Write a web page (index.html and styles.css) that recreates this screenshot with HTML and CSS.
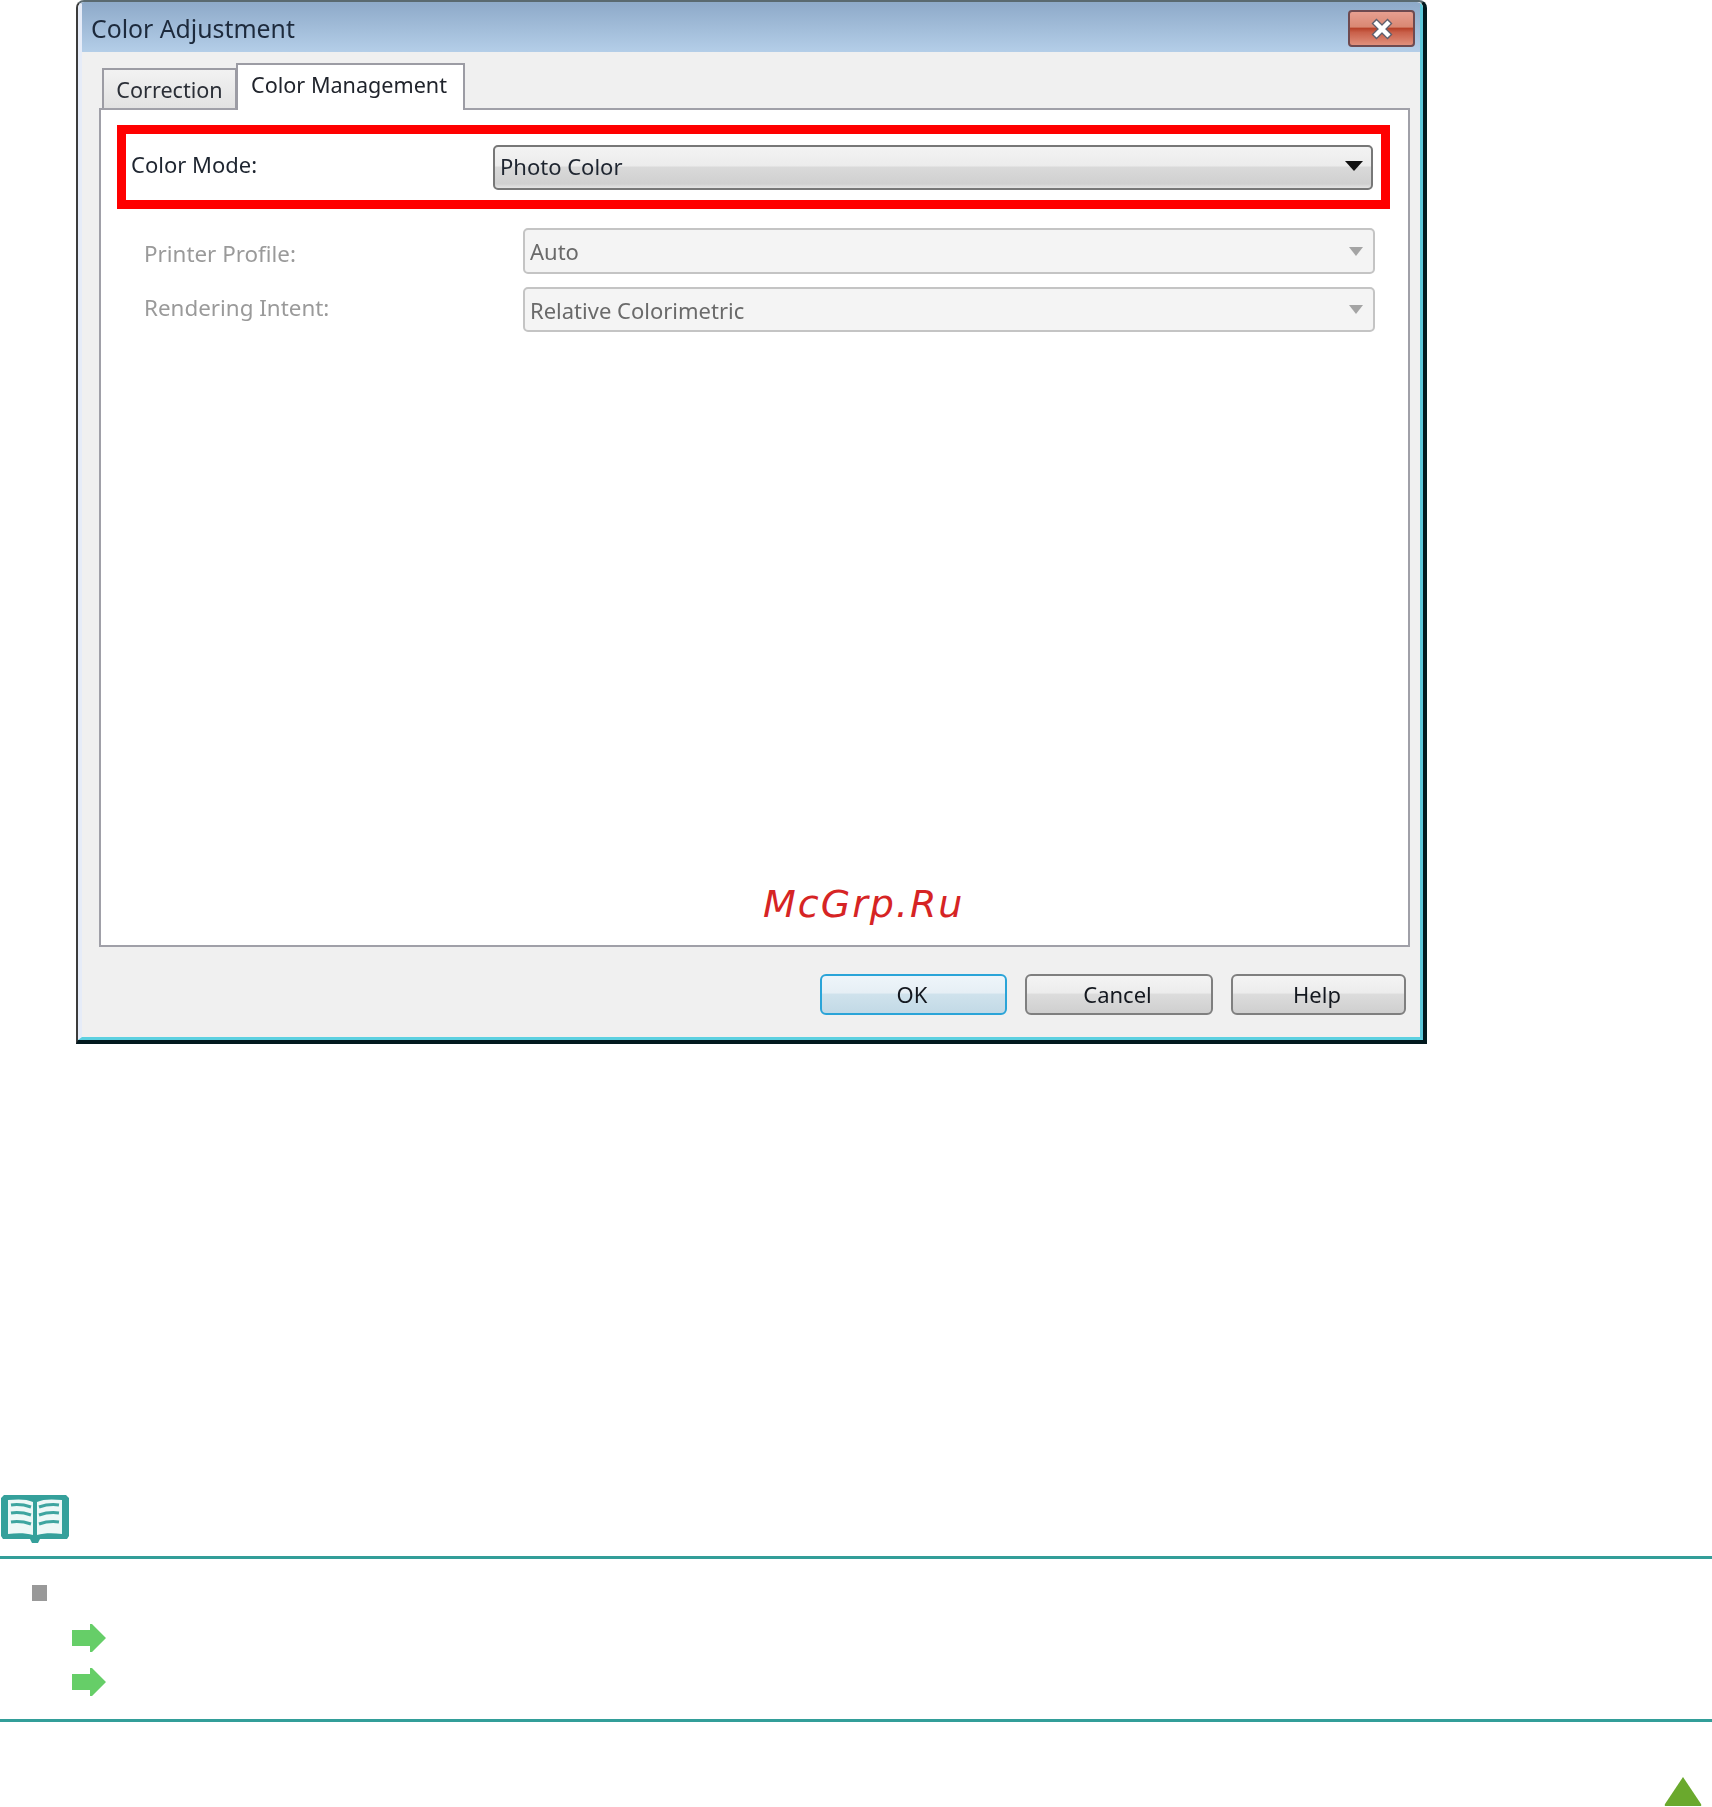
FILE: index.html
```html
<!DOCTYPE html>
<html lang="en">
<head>
<meta charset="utf-8">
<title>Color Adjustment</title>
<link rel="stylesheet" href="styles.css">
</head>
<body>
<div class="page">
  <section class="dialog">
    <div class="dialog-inner">
      <header class="titlebar">
        <span class="title">Color Adjustment</span>
        <div class="close">
          <svg width="26" height="22" viewBox="0 0 26 22"><path d="M5 3l16 16M21 3L5 19" stroke="#5d5f6e" stroke-width="7" fill="none"/><path d="M6 4l14 14M20 4L6 18" stroke="#fff" stroke-width="4.5" fill="none"/></svg>
        </div>
      </header>
      <div class="client">
        <div class="tabs">
          <div class="tab tab-back"><span>Correction</span></div>
          <div class="tab tab-active"><span>Color Management</span></div>
        </div>
        <div class="panel">
          <div class="highlight">
            <span class="label label-strong">Color Mode:</span>
            <div class="select select-on">
              <span>Photo Color</span>
              <i class="caret caret-on"></i>
            </div>
          </div>
          <div class="fields">
            <span class="label label-off label-profile">Printer Profile:</span>
            <div class="select select-off"><span>Auto</span><i class="caret caret-off"></i></div>
            <span class="label label-off label-intent">Rendering Intent:</span>
            <div class="select select-off select-second"><span>Relative Colorimetric</span><i class="caret caret-off"></i></div>
          </div>
          <div class="watermark">McGrp.Ru</div>
        </div>
        <div class="buttons">
          <div class="btn btn-ok"><span>OK</span></div>
          <div class="btn btn-cancel"><span>Cancel</span></div>
          <div class="btn btn-help"><span>Help</span></div>
        </div>
      </div>
    </div>
  </section>

  <section class="note">
    <svg class="book" width="70" height="48" viewBox="0 0 70 48">
      <path d="M4 0h62l3 3v38l-2 3H40l-2 4h-6l-2-4H3l-2-3V3z" fill="#35a09b"/>
      <path d="M8 5c10-1 19-1 25 2v33c-7-2-16-2-25-1zM62 5c-10-1-19-1-25 2v33c7-2 16-2 25-1z" fill="#eef8f7"/>
      <path d="M11 10c7-1 14 0 20 2M11 18c7-1 14 0 20 2M11 27c7-1 14 0 20 2M59 10c-7-1-14 0-20 2M59 18c-7-1-14 0-20 2M59 27c-7-1-14 0-20 2" stroke="#3fa5a0" stroke-width="3" fill="none"/>
    </svg>
    <hr class="rule rule-top">
    <div class="bullet"></div>
    <svg class="arrow arrow-first" width="34" height="28" viewBox="0 0 34 28"><path d="M0 6h18V0h2l14 14-14 14h-2v-6H0z" fill="#66ce68"/></svg>
    <svg class="arrow arrow-second" width="34" height="28" viewBox="0 0 34 28"><path d="M0 6h18V0h2l14 14-14 14h-2v-6H0z" fill="#66ce68"/></svg>
    <hr class="rule rule-bottom">
    <svg class="top-link" width="42" height="31" viewBox="0 0 42 31"><path d="M21 1L39 28q1 2-1 2H4q-2 0-1-2z" fill="#6aa92d"/></svg>
  </section>
</div>
</body>
</html>
```

FILE: styles.css
```css
* { box-sizing: border-box; }
html, body { margin: 0; padding: 0; background: #fff; }

.page {
  width: 1712px;
  height: 1807px;
  overflow: hidden;
  display: flex;
  flex-direction: column;
  font-family: "Noto Sans", "Open Sans", sans-serif;
}

.dialog {
  width: 1351px;
  height: 1044px;
  margin-left: 76px;
  flex: none;
  border-style: solid;
  border-color: #5a6a70 #02191e #02191e #3c3c3c;
  border-width: 2px 4px 4px 2px;
  border-radius: 8px 8px 0 0;
}
.dialog-inner {
  height: 100%;
  display: flex;
  flex-direction: column;
  border-style: solid;
  border-color: #8fabc9 #5cc8da #5cd0e0 #e6ecf8;
  border-width: 2px 3px 3px 4px;
  border-radius: 6px 6px 0 0;
  background: #f0f0f0;
}

.titlebar {
  height: 48px;
  flex: none;
  display: flex;
  justify-content: space-between;
  align-items: flex-start;
  padding: 6px 5px 0 9px;
  background: linear-gradient(#8fabca, #b4cee8);
}
.title {
  font-size: 24.8px;
  line-height: 36px;
  color: #1d2a3c;
  filter: blur(.7px);
}
.close {
  width: 67px;
  height: 37px;
  display: flex;
  align-items: center;
  justify-content: center;
  border: 2px solid #6e4a50;
  border-radius: 4px;
  background: linear-gradient(#e79f90, #d98873 45%, #b8432b 50%, #c9604a 62%, #e0907c);
  filter: blur(.5px);
}

.client {
  flex: 1;
  min-height: 0;
  display: flex;
  flex-direction: column;
}
.tabs {
  height: 56px;
  flex: none;
  display: flex;
  align-items: flex-end;
  padding-left: 20px;
}
.tab {
  display: flex;
  align-items: center;
  border: 2px solid #9c9ca4;
  border-bottom: 0;
  font-size: 21.6px;
  color: #20242c;
}
.tab span { filter: blur(.7px); }
.tab-back {
  width: 135px;
  height: 40px;
  justify-content: center;
  background: linear-gradient(#f2f2f2, #e2e2e2);
  color: #2a2e36;
}
.tab-active {
  width: 229px;
  height: 47px;
  margin-bottom: -2px;
  margin-left: -1px;
  padding: 0 0 6px 13px;
  background: #fff;
  position: relative;
  z-index: 1;
}

.panel {
  flex: 1;
  min-height: 0;
  margin: 0 10px 0 17px;
  padding-top: 15px;
  border: 2px solid #a0a0a8;
  background: #fff;
  position: relative;
}

.highlight {
  height: 84px;
  margin: 0 18px 0 16px;
  padding: 0 8px 0 5px;
  display: flex;
  align-items: center;
  justify-content: space-between;
  border: 9px solid #f00;
}

.label {
  font-size: 22px;
  filter: blur(.7px);
}
.label-strong { color: #1e2530; padding-bottom: 6px; }
.label-off { color: #9a9a9a; font-size: 22.4px; }
.label-profile { padding-top: 4px; }
.label-intent { padding-bottom: 4px; }

.select {
  display: flex;
  align-items: center;
  justify-content: space-between;
  border-radius: 5px;
  font-size: 22px;
}
.select span { filter: blur(.7px); }
.select-on {
  width: 880px;
  height: 45px;
  padding: 0 8px 2px 5px;
  border: 2px solid #777;
  background: linear-gradient(#f3f3f3, #ececec 45%, #d9d9d9 50%, #d0d0d0 90%, #e4e4e4);
  color: #1e2530;
}
.select-off {
  height: 46px;
  padding: 0 10px 0 5px;
  border: 2px solid #c4c4c4;
  background: #f4f4f4;
  color: #6a6a6a;
}
.select-second { height: 45px; }

.caret {
  display: block;
  width: 0;
  height: 0;
  border-style: solid;
  border-color: transparent;
  border-bottom-width: 0;
}
.caret-on {
  border-width: 10px 9px 0;
  border-top-color: #111;
}
.caret-off {
  border-width: 9px 7px 0;
  border-top-color: #a4a4a4;
}

.fields {
  display: grid;
  grid-template-columns: 379px 852px;
  row-gap: 13px;
  align-items: center;
  margin-top: 19px;
  padding-left: 43px;
}

.watermark {
  position: absolute;
  left: 662px;
  top: 772px;
  font-family: "DejaVu Sans", sans-serif;
  font-style: italic;
  font-size: 38px;
  line-height: 44px;
  letter-spacing: 2px;
  color: #d62424;
}

.buttons {
  height: 90px;
  flex: none;
  display: flex;
  justify-content: flex-end;
  gap: 18px;
  padding: 27px 14px 0 0;
}
.btn {
  height: 41px;
  padding: 0 3px 2px 0;
  display: flex;
  align-items: center;
  justify-content: center;
  border: 2px solid #7f7f7f;
  border-radius: 6px;
  font-size: 22px;
  color: #14181f;
  background: linear-gradient(#f4f4f4, #ececec 45%, #dcdcdc 50%, #cfcfcf);
}
.btn span { filter: blur(.7px); }
.btn-ok {
  width: 187px;
  border-color: #2aa4d8;
  background: linear-gradient(#eef5fa, #e6eff5 45%, #cfe2ec 50%, #c2d9e6);
}
.btn-cancel { width: 188px; }
.btn-help { width: 175px; }

.note {
  flex: none;
  display: flex;
  flex-direction: column;
  margin-top: 451px;
}
.book, .arrow, .top-link { display: block; flex: none; filter: blur(.7px); }
.rule {
  width: 100%;
  height: 3px;
  margin: 0;
  border: 0;
  background: #339e99;
  flex: none;
}
.rule-top { margin-top: 13px; }
.bullet {
  width: 15px;
  height: 16px;
  margin: 26px 0 0 32px;
  background: #999;
}
.arrow { margin-left: 72px; }
.arrow-first { margin-top: 23px; }
.arrow-second { margin-top: 16px; }
.rule-bottom { margin-top: 23px; }
.top-link {
  align-self: flex-end;
  margin: 54px 8px 0 0;
}
```
